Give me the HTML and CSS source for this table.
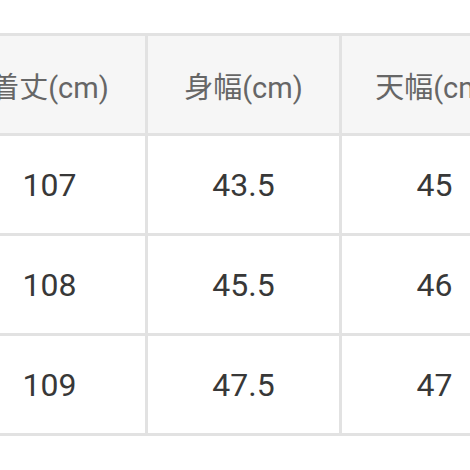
FILE: index.html
```html
<!DOCTYPE html>
<html lang="ja">
<head>
<meta charset="utf-8">
<link rel="stylesheet" href="styles.css">
</head>
<body>
<div class="page">
  <div class="table">
    <div class="cell head">着丈(cm)</div>
    <div class="cell head">身幅(cm)</div>
    <div class="cell head">天幅(cm)</div>
    <div class="cell">107</div>
    <div class="cell">43.5</div>
    <div class="cell">45</div>
    <div class="cell">108</div>
    <div class="cell">45.5</div>
    <div class="cell">46</div>
    <div class="cell">109</div>
    <div class="cell">47.5</div>
    <div class="cell">47</div>
  </div>
</div>
</body>
</html>
```
FILE: styles.css
```css
html, body {
  margin: 0;
  padding: 0;
  background: #ffffff;
  overflow: hidden;
}
.page {
  width: 470px;
  height: 470px;
  padding-top: 33px;
  box-sizing: border-box;
  overflow: hidden;
}
.table {
  display: grid;
  grid-template-columns: 191px 191px 185px;
  grid-template-rows: repeat(4, 97px);
  gap: 3px;
  padding: 3px;
  background: #e2e2e2;
  width: max-content;
  margin-left: -49px;
}
.cell {
  background: #ffffff;
  display: flex;
  align-items: center;
  justify-content: center;
  font-family: Roboto, "Noto Sans CJK JP", sans-serif;
  font-size: 32px;
  color: #383838;
}
.cell.head {
  background: #f6f6f6;
  color: #666666;
  font-size: 29px;
}
```
